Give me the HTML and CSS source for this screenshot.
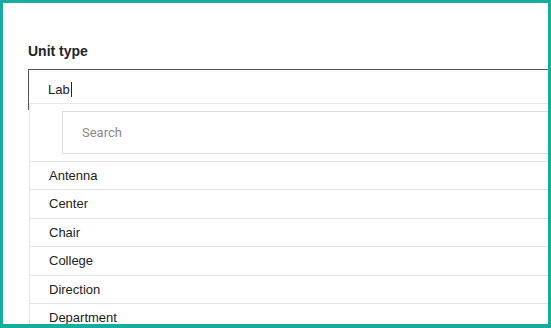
FILE: index.html
```html
<!DOCTYPE html>
<html lang="en">

<head>
    <meta charset="UTF-8">
    <meta name="viewport" content="width=device-width, initial-scale=1.0">
    <title>Unit type</title>
    <link rel="stylesheet" href="styles.css">
</head>

<body>
    <div class="frame">
        <div class="field">
            <label class="field-label" for="unit">Unit type</label>
            <div class="select">
                <div class="select-value" id="unit"><span class="caret">Lab</span></div>
                <div class="dropdown">
                    <div class="search-wrap">
                        <input class="search" type="text" placeholder="Search">
                    </div>
                    <ul class="options">
                        <li>Antenna</li>
                        <li>Center</li>
                        <li>Chair</li>
                        <li>College</li>
                        <li>Direction</li>
                        <li>Department</li>
                    </ul>
                </div>
            </div>
        </div>
    </div>
</body>

</html>
```

FILE: styles.css
```css
* {
    box-sizing: border-box;
}

body {
    font-family: 'Liberation Sans', Arial, sans-serif;
    background-color: #fff;
    margin: 0;
    padding: 0;
}

.frame {
    width: 551px;
    height: 328px;
    border: 3px solid #17ad9e;
    border-bottom-width: 4px;
    overflow: hidden;
    padding: 40px 0 0 25px;
}

.field {
    width: 560px;
}

.field-label {
    display: block;
    font-size: 14px;
    font-weight: bold;
    color: #1f2328;
    height: 26px;
    line-height: 16px;
}

.select {
    position: relative;
}

.select-value {
    height: 34px;
    border-top: 1px solid #555;
    border-left: 1px solid #555;
    padding: 0 0 0 19px;
    font-size: 13px;
    line-height: 40px;
    color: #222;
    height: 41px;
}

.caret {
    border-right: 1px solid #222;
    padding-right: 1px;
}

.dropdown {
    position: absolute;
    top: 34px;
    left: 1px;
    right: 0;
    background-color: #fff;
    border-top: 1px solid #e6e6e6;
    border-left: 1px solid #e6e6e6;
}

.search-wrap {
    padding: 7px 0 7px 32px;
}

.search {
    display: block;
    width: 100%;
    height: 43px;
    border: 1px solid #dcdcdc;
    border-right: none;
    padding: 0 0 0 19px;
    font-family: 'Roboto', 'Liberation Sans', sans-serif;
    font-size: 13px;
    outline: none;
}

.search::placeholder {
    color: #8a8a8a;
}

.options {
    list-style: none;
    margin: 0;
    padding: 0;
}

.options li {
    height: 28.4px;
    border-top: 1px solid #e3e3e3;
    padding-left: 19px;
    font-size: 13px;
    line-height: 27px;
    color: #222;
}
```
